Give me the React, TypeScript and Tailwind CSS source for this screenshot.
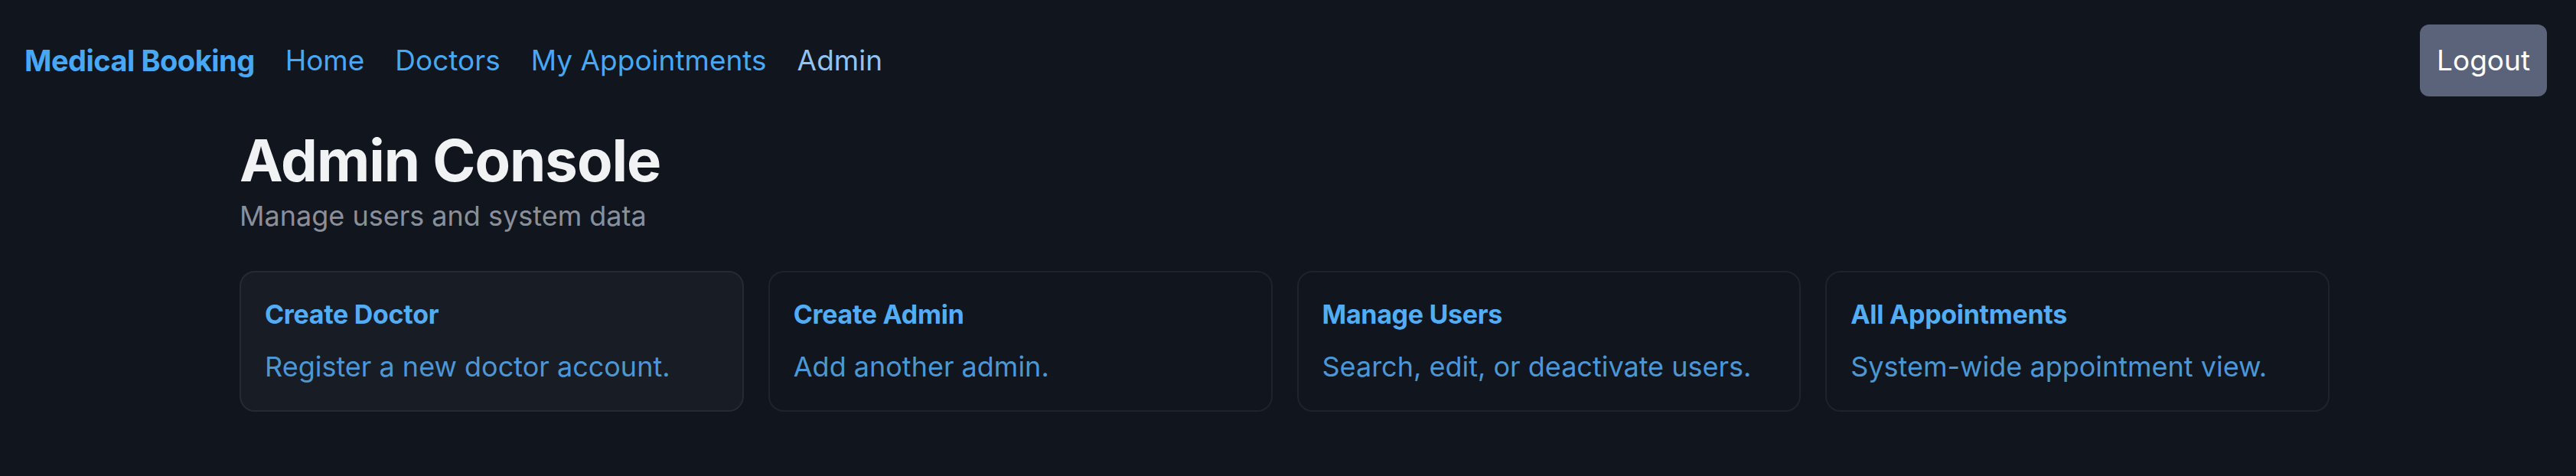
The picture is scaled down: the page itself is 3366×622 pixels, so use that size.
import React from 'react';

interface AdminCard {
  title: string;
  description: string;
  highlighted?: boolean;
}

const NAV_LINKS = ['Home', 'Doctors', 'My Appointments'];

const CARDS: AdminCard[] = [
  { title: 'Create Doctor', description: 'Register a new doctor account.', highlighted: true },
  { title: 'Create Admin', description: 'Add another admin.' },
  { title: 'Manage Users', description: 'Search, edit, or deactivate users.' },
  { title: 'All Appointments', description: 'System-wide appointment view.' },
];

const App: React.FC = () => {
  return (
    <div
      className="min-h-[622px] bg-[#11151d] text-[#f1f2f4]"
      style={{ fontFamily: 'Inter, "Noto Sans", sans-serif' }}
    >
      <nav className="flex items-center justify-between pl-[32px] pr-[38px] py-[32px]">
        <div className="flex items-center gap-[40px]">
          <a className="text-[38px] font-bold leading-[56px] tracking-[-0.5px] text-[#47a8f5]">
            Medical Booking
          </a>
          {NAV_LINKS.map((link) => (
            <a key={link} className="text-[37px] leading-[48px] text-[#47a8f5]">
              {link}
            </a>
          ))}
          <a className="text-[37px] leading-[48px] text-[#92c3f3]">Admin</a>
        </div>
        <button
          type="button"
          className="h-[94px] rounded-[12px] bg-[#5a6379] px-[22px] text-[37px] leading-[48px] text-white"
        >
          Logout
        </button>
      </nav>

      <main className="ml-[313px] w-[2731px] pt-[8px]">
        <h1 className="text-[76px] font-bold leading-[86px] tracking-[-1px] text-[#f1f2f4]">
          Admin Console
        </h1>
        <p className="mt-[6px] text-[36px] leading-[48px] text-[#8a909b]">
          Manage users and system data
        </p>

        <div className="mt-[48px] grid grid-cols-4 gap-[32px]">
          {CARDS.map((card) => (
            <div
              key={card.title}
              className={
                card.highlighted
                  ? 'h-[184px] rounded-[20px] border-2 border-[#262a33] bg-[#181c24] px-[31px] pt-[31px]'
                  : 'h-[184px] rounded-[20px] border-2 border-[#1f232b] bg-[#11151d] px-[31px] pt-[31px]'
              }
            >
              <h3 className="text-[34px] font-bold leading-[48px] tracking-[-0.3px] text-[#52adf5]">
                {card.title}
              </h3>
              <p className="mt-[14px] text-[36px] leading-[60px] text-[#4c97d6]">
                {card.description}
              </p>
            </div>
          ))}
        </div>
      </main>
    </div>
  );
};

export default App;
